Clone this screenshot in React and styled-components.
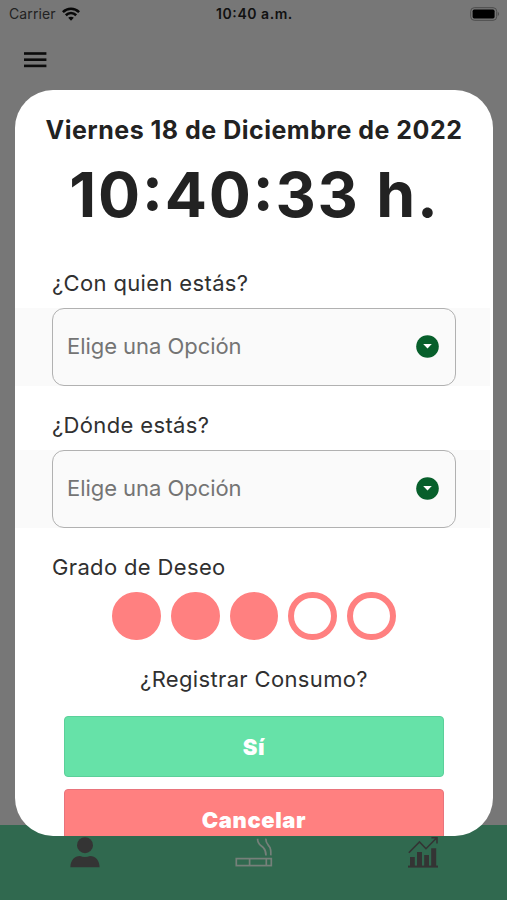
import React from 'react';
import styled, { createGlobalStyle } from 'styled-components';

const GlobalStyle = createGlobalStyle`
  * {
    box-sizing: border-box;
  }
  body {
    margin: 0;
    overflow: hidden;
    background-color: #777;
  }
  h1, h2, p {
    margin: 0;
  }
  svg {
    display: block;
  }
`;

const Screen = styled.div`
  position: relative;
  width: 507px;
  height: 900px;
  display: flex;
  flex-direction: column;
  background-color: #777;
  overflow: hidden;
  font-family: Inter, 'Liberation Sans', sans-serif;
`;
const StatusBar = styled.div`
  height: 28px;
  padding: 0 7px 0 9px;
  display: grid;
  grid-template-columns: 1fr auto 1fr;
  align-items: center;
  font-size: 14px;
  line-height: 28px;
  color: #222;
  .carrier {
    display: flex;
    align-items: center;
    gap: 6px;
    letter-spacing: 0.1px;
  }
  .time {
    font-weight: 600;
    letter-spacing: 0.55px;
    font-feature-settings: 'case';
    color: #111;
  }
  .battery {
    justify-self: end;
  }
`;
const AppBar = styled.div`
  height: 64px;
  display: flex;
  align-items: center;
  padding-left: 24px;
`;
const BottomNav = styled.div`
  margin-top: auto;
  height: 75px;
  padding-top: 10px;
  display: grid;
  grid-template-columns: repeat(3, 169px);
  justify-items: center;
  align-items: start;
  background-color: #30694f;
`;
const Modal = styled.div`
  position: absolute;
  top: 90px;
  left: 15px;
  width: 478px;
  height: 746px;
  border-radius: 38px;
  background-color: #fff;
  overflow: hidden;
  display: flex;
  flex-direction: column;
`;
const DateTitle = styled.h2`
  margin-top: 25px;
  text-align: center;
  white-space: nowrap;
  font-size: 25px;
  font-weight: 650;
  line-height: 30px;
  letter-spacing: 0.5px;
  color: #222;
`;
const Clock = styled.h1`
  margin-top: 12px;
  padding-left: 1px;
  text-align: center;
  white-space: nowrap;
  font-size: 62.5px;
  font-weight: 680;
  line-height: 74px;
  letter-spacing: 1.8px;
  font-feature-settings: 'case';
  color: #222;
`;
const Label = styled.p`
  margin-top: ${(props) => props.$top}px;
  padding-left: ${(props) => (props.$center ? 0 : 37)}px;
  text-align: ${(props) => (props.$center ? 'center' : 'left')};
  font-size: 22px;
  line-height: 28px;
  letter-spacing: 0.35px;
  color: #303030;
`;
const SelectRow = styled.div`
  margin: ${(props) => props.$top}px 3px 0 0;
  padding: 0 34px 0 37px;
  background-color: #fafafa;
`;
const Select = styled.div`
  height: 78px;
  padding: 0 16px 2px 14px;
  display: flex;
  align-items: center;
  justify-content: space-between;
  border: 1.5px solid #b1b1b1;
  border-radius: 12px;
  font-size: 22px;
  letter-spacing: -0.05px;
  color: #747474;
`;
const Rating = styled.div`
  margin-top: 10.5px;
  display: flex;
  justify-content: center;
  gap: 10px;
`;
const Dot = styled.span`
  width: 48.7px;
  height: 48.7px;
  border-radius: 50%;
  border: 6px solid #ff8080;
  background-color: ${(props) => (props.$filled ? '#ff8080' : '#fff')};
`;
const Button = styled.div`
  flex: none;
  height: 61px;
  margin: ${(props) => props.$top}px 49px 0;
  padding-top: 1px;
  display: flex;
  align-items: center;
  justify-content: center;
  border: 1px solid ${(props) => props.$border};
  border-radius: 4px;
  background-color: ${(props) => props.$color};
  font-size: 22px;
  font-weight: 900;
  letter-spacing: 0.6px;
  color: #fff;
`;

const WifiIcon = () => (
  <svg width="18" height="14" viewBox="0 0 18 14" fill="none" stroke="#080808" strokeWidth="2.6">
    <path d="M0.9 5.1C5.5 0.7 12.5 0.7 17.1 5.1" />
    <path d="M3.8 8.2C6.8 5.3 11.2 5.3 14.2 8.2" />
    <path d="M9 13.7L6.2 10.8C7.8 9.3 10.2 9.3 11.8 10.8Z" fill="#080808" stroke="none" />
  </svg>
);

const BatteryIcon = () => (
  <svg width="30" height="14" viewBox="0 0 30 14">
    <rect x="0.7" y="0.7" width="26" height="12.6" rx="3.6" fill="none" stroke="#4c4c4c" strokeWidth="1" />
    <rect x="2.6" y="2.6" width="22" height="8.8" rx="1.6" fill="#000" />
    <path d="M27.8 4.8Q30.4 7 27.8 9.2Z" fill="#4c4c4c" />
  </svg>
);

const MenuIcon = () => (
  <svg width="23" height="16" viewBox="0 0 23 16" fill="#0b0b0b">
    <rect width="22.4" height="2.6" y="0.2" />
    <rect width="22.4" height="2.6" y="6.4" />
    <rect width="22.4" height="2.6" y="12.6" />
  </svg>
);

const ArrowIcon = () => (
  <svg width="23" height="23" viewBox="0 0 23 23">
    <circle cx="11.5" cy="11.5" r="11.3" fill="#075f2b" />
    <path d="M7.2 9.1H15.8L11.5 13.6Z" fill="#fff" />
  </svg>
);

const UserIcon = () => (
  <svg width="30" height="34" viewBox="0 0 30 34" fill="#343434">
    <circle cx="15" cy="10.2" r="8" />
    <path d="M0.4 32.3C0.4 25.5 4.5 21 10 21Q15 23.2 20 21C25.6 21 29.6 25.5 29.6 32.3Z" />
  </svg>
);

const CigaretteIcon = () => (
  <svg width="38" height="34" viewBox="0 0 38 34" fill="none" stroke="#76807a" strokeWidth="1.7">
    <rect x="1.3" y="23.6" width="35" height="7" />
    <path d="M14.6 23.6V30.6M31.3 23.6V30.6" />
    <path d="M22.6 3.8C22.4 9.8 26 10.2 28.5 12.8C30.8 15.2 31 17.5 31 20.4" />
    <path d="M30.8 3.6C30.6 7.6 32.5 9.1 34.3 11.5C36.2 14 36 17 35.8 20.4" />
  </svg>
);

const ChartIcon = () => (
  <svg width="30" height="34" viewBox="0 0 30 34" fill="#343434">
    <path d="M0 30.6H30V32.6H0Z" />
    <path d="M2 22H6.8V31H2ZM9 17H14V31H9ZM16.2 20H21V31H16.2ZM23.2 13.3H28.2V31H23.2Z" />
    <path d="M0.8 17.8L11.5 7L18 13.7L28.3 3.3M23.4 2.8H29V8.5" fill="none" stroke="#343434" strokeWidth="1.6" />
  </svg>
);

const grades = [true, true, true, false, false];

export default () => {
  return (
    <>
      <GlobalStyle />
      <Screen>
        <StatusBar>
          <div className="carrier">
            <span>Carrier</span>
            <WifiIcon />
          </div>
          <span className="time">10:40 a.m.</span>
          <div className="battery">
            <BatteryIcon />
          </div>
        </StatusBar>
        <AppBar>
          <MenuIcon />
        </AppBar>
        <BottomNav>
          <UserIcon />
          <CigaretteIcon />
          <ChartIcon />
        </BottomNav>
        <Modal>
          <DateTitle>Viernes 18 de Diciembre de 2022</DateTitle>
          <Clock>10:40:33 h.</Clock>
          <Label $top={38}>¿Con quien estás?</Label>
          <SelectRow $top={11}>
            <Select>
              <span>Elige una Opción</span>
              <ArrowIcon />
            </Select>
          </SelectRow>
          <Label $top={25}>¿Dónde estás?</Label>
          <SelectRow $top={11}>
            <Select>
              <span>Elige una Opción</span>
              <ArrowIcon />
            </Select>
          </SelectRow>
          <Label $top={25}>Grado de Deseo</Label>
          <Rating>
            {grades.map((filled, i) => (
              <Dot key={i} $filled={filled} />
            ))}
          </Rating>
          <Label $top={24.5} $center>
            ¿Registrar Consumo?
          </Label>
          <Button $top={23.3} $color="#66e2a8" $border="#5bd09a">
            Sí
          </Button>
          <Button $top={12.5} $color="#ff8080" $border="#e9747c">
            Cancelar
          </Button>
        </Modal>
      </Screen>
    </>
  );
};
